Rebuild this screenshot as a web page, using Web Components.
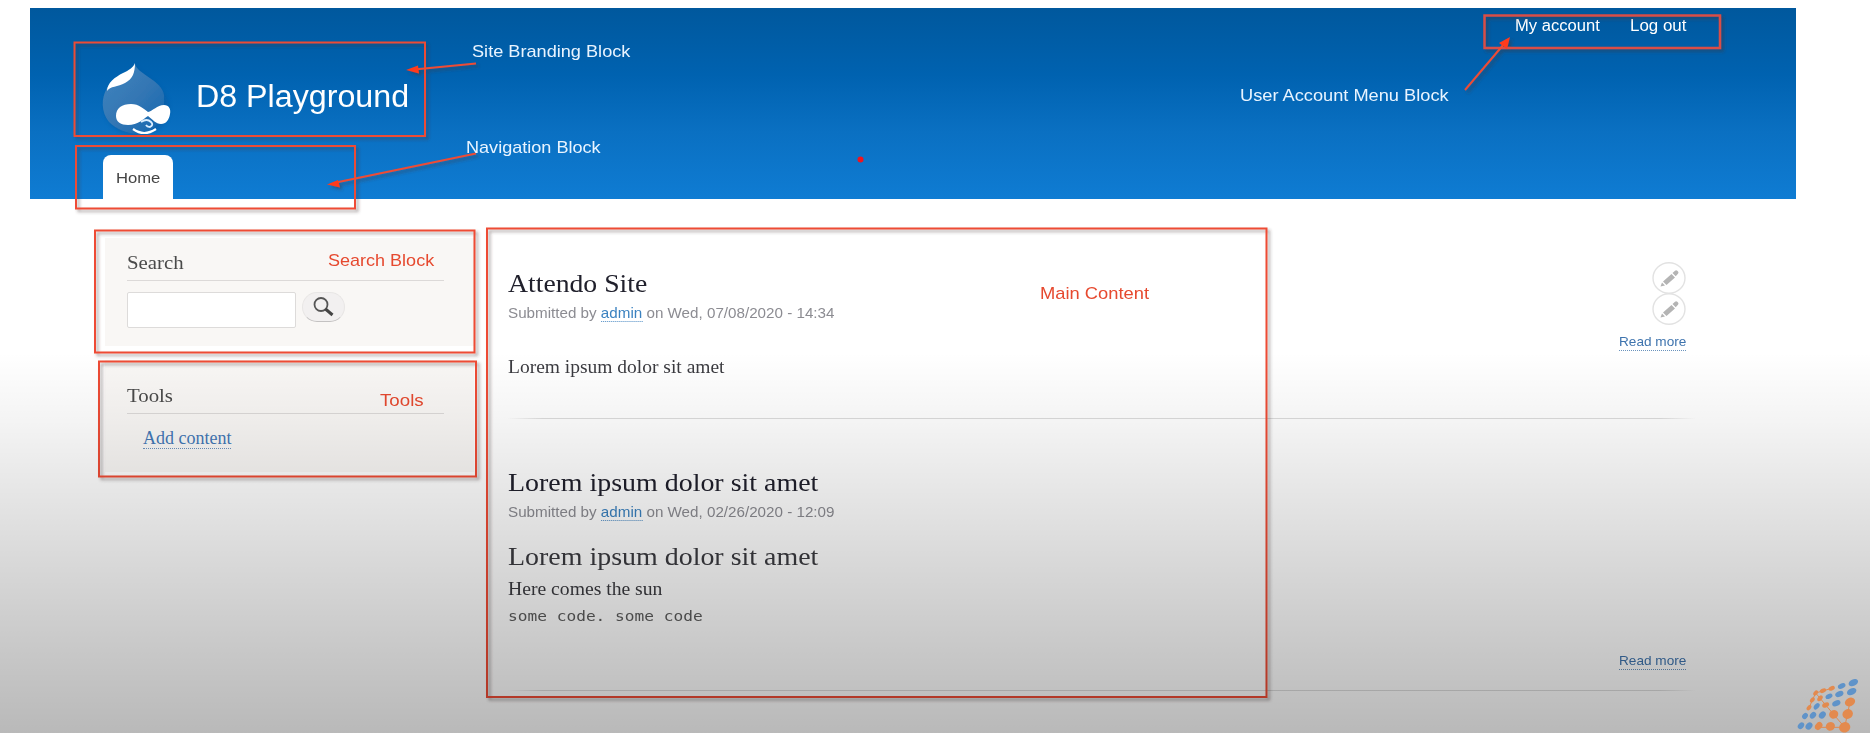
<!DOCTYPE html>
<html lang="en">
<head>
<meta charset="utf-8">
<title>D8 Playground</title>
<style>
html,body{margin:0;width:100%;height:733px;overflow:hidden;background:#fff}
body{position:relative;font-family:"Liberation Sans",Arial,sans-serif}
</style>
</head>
<body>
<site-page></site-page>
<script>
const define=(name,html,setup)=>customElements.define(name,class extends HTMLElement{
  constructor(){super();this.attachShadow({mode:'open'}).innerHTML=html;}
  connectedCallback(){if(setup)setup.call(this,this.shadowRoot);}
});

/* One line of text stretched to the width given in "w" */
define('fit-text',`<style>
:host{display:block;white-space:nowrap}
span{display:inline-block;transform-origin:0 50%}
</style><span><slot></slot></span>`,function(r){
  const w=+this.getAttribute('w'),s=r.querySelector('span');
  this.style.width=w+'px';
  s.style.transform='scaleX('+w/s.offsetWidth+')';
});

define('drop-logo',`<style>:host{display:block;width:72px;height:76px}svg{display:block}</style>
<svg width="72" height="76" viewBox="0 0 72 76">
<defs><filter id="b"><feGaussianBlur stdDeviation=".7"/></filter><filter id="c" x="-.2" y="-.2" width="1.4" height="1.4"><feGaussianBlur stdDeviation="2"/></filter>
<linearGradient id="g" x1="0" y1="0" x2="1" y2="1"><stop offset="0" stop-color="#3f85bf"/><stop offset=".5" stop-color="#3577b4"/><stop offset="1" stop-color="#1266b0"/></linearGradient></defs>
<path d="M34 3C37 13 67 22 68 45C69 63 54 73 37 73C17 73 3 61 3 43C3 22 31 18 34 3Z" fill="#07549a" opacity=".45" filter="url(#c)"/>
<path d="M34 2C36 12 61 18 63 33C64 50 60 62 48 69C36 75 18 70 8 60C0 50 0 36 6 26C13 15 31 15 34 2Z" fill="url(#g)" filter="url(#b)"/>
<path d="M34 1C34 10 32 17 24 21C17 25 9 24 6 29C6 21 14 15 22 11C28 8 32 6 34 1Z" fill="#fff" filter="url(#b)"/>
<path d="M15 54C15 46 21 42 30 42C38 42 43 47 47 50C52 49 56 43 63 43C68 43 70 47 69 52C68 58 65 62 60 62C55 62 51 57 47 54C42 57 37 63 27 63C20 63 15 60 15 54Z" fill="#fff"/>
<path d="M40 60Q46 56 50 60Q53 63 49 65Q46 65 45 63" fill="none" stroke="#dceeff" stroke-width="1.8"/>
<path d="M32 67Q43 75 55 67" fill="none" stroke="#fff" stroke-width="2.2"/>
</svg>`);

define('site-header',`<style>
:host{display:flex;justify-content:space-between;box-sizing:border-box;margin:8px 74px 0 30px;height:191px;padding:0 110px 0 71px;color:#fff;background:linear-gradient(#00589d,#0062b0 35%,#0a70c2 65%,#0f7cd3)}
.left{display:flex;flex-direction:column;justify-content:space-between}
.brand{display:flex;padding-top:54px;gap:23px}
.brand fit-text{font-size:31px;line-height:36px;margin-top:17px}
.tab{box-sizing:border-box;width:70px;height:44px;margin-left:2px;padding:12px 0 0 13px;background:#fff;border-radius:8px 8px 0 0;font-size:15.5px;line-height:22px;color:#444}
nav{display:flex;gap:30px;font-size:16px;line-height:20px;padding-top:8px;height:20px}
</style>
<div class="left"><div class="brand"><drop-logo></drop-logo><fit-text w="213">D8 Playground</fit-text></div>
<div class="tab"><fit-text w="44">Home</fit-text></div></div>
<nav><fit-text w="85">My account</fit-text><fit-text w="56">Log out</fit-text></nav>`);

define('side-block',`<style>
:host{display:block;box-sizing:border-box;width:369px;background:#f9f7f5;padding:0 30px 0 22px}
.h{height:31px;border-bottom:1px solid #dcd9d8;font:19px/26px "Liberation Serif",serif;color:#4a4a4a;box-sizing:border-box}
</style><div class="h"><slot name="title"></slot></div><slot></slot>`);

define('search-form',`<style>
:host{display:flex;gap:6px;padding-top:11px}
.in{width:167px;height:34px;border:1px solid #dddbda;background:#fff;border-radius:2px}
.b{width:41px;height:28px;border:1px solid #e8e6e5;border-bottom-color:#c4c2c2;border-radius:15px;background:#f2f0f0}
svg{display:block}
</style><div class="in"></div><div class="b"><svg width="41" height="28" viewBox="0 0 41 28"><circle cx="18" cy="11.5" r="6.5" fill="none" stroke="#555" stroke-width="1.8"/><path d="M22.500 16l7 6" stroke="#444" stroke-width="3"/></svg></div>`);

define('edit-button',`<style>:host{display:block;width:34px;height:31px}svg{display:block}</style>
<svg width="34" height="33" viewBox="0 0 34 33"><ellipse cx="17" cy="16" rx="16" ry="15.3" fill="#fff" stroke="#e2e2e2" stroke-width="1.4"/>
<g fill="#b4b4b4"><path d="M8.500 24.500l1.500-4 3 3zM11 19.500l8.500-7.500 3.500 3.500-8.500 7.500zM20.500 11l2.500-2.300q1.200-1 2.300 0l.7.8q1 1 0 2.200l-2.300 2.500z"/></g></svg>`);

define('post-item',`<style>
:host{display:flex;box-sizing:border-box;justify-content:space-between;width:1187px;border-bottom:1px solid transparent;border-image:linear-gradient(90deg,transparent,#dcdcdc 3%,#dcdcdc 97%,transparent) 1;padding-right:9px}
.side{display:flex;flex-direction:column;align-items:flex-end}
a{color:#3f74ae;font:13px/16px "Liberation Sans",Arial,sans-serif;border-bottom:1px dotted #6a93bd;height:16px}
</style><div><slot></slot></div><div class="side"><slot name="tools"></slot><a><fit-text w="67">Read more</fit-text></a></div>`);

define('annotation-layer',`<style>
:host{position:absolute;inset:0;pointer-events:none}
svg{position:absolute;left:0;top:0}
fit-text{position:absolute;font-size:17px;line-height:20px}
.w{color:#e9f4ff}.r{color:#e6492f}
</style>
<svg width="1870" height="733" viewBox="0 0 1870 733">
<defs><filter id="s" x="0" y="0" width="1870" height="733" filterUnits="userSpaceOnUse"><feDropShadow dx="2.500" dy="2.500" stdDeviation="1.500" flood-color="#433" flood-opacity=".45"/></filter></defs>
<g filter="url(#s)" fill="none" stroke="#ee4c34" stroke-width="2">
<path d="M74.500 42.500H425V136H74.500Z"/><path d="M76 146H355V208.500H76Z"/>
<path d="M1484.500 15.500H1720V48H1484.500Z" stroke="#d94d46" stroke-width="2.500"/>
<path d="M95 230.500H474.500V352.500H95Z"/><path d="M99 361.500H476V476.500H99Z"/><path d="M487 228.500H1266.500V697H487Z"/>
<path d="M476 63.500L414 69.500M476 153.500L336 182.500M1465 90L1504 44"/>
<g fill="#ff3a1c" stroke="none"><path d="M406 70L418 65.500L419 73.500Z"/><path d="M327 184.500L338 180L340 187.500Z"/><path d="M1510 37L1507 49L1499 43Z"/></g>
</g><circle cx="860.500" cy="159.500" r="3" fill="#f0141e"/></svg>
<fit-text class="w" w="158" style="left:472px;top:42px">Site Branding Block</fit-text>
<fit-text class="w" w="135" style="left:466px;top:138px">Navigation Block</fit-text>
<fit-text class="w" w="209" style="left:1240px;top:86px">User Account Menu Block</fit-text>
<fit-text class="r" w="106" style="left:328px;top:251px">Search Block</fit-text>
<fit-text class="r" w="44" style="left:380px;top:391px">Tools</fit-text>
<fit-text class="r" w="109" style="left:1040px;top:284px">Main Content</fit-text>`);

define('corner-logo',`<style>:host{position:absolute;right:0;bottom:0;width:90px;height:70px}svg{display:block}</style>
<svg width="90" height="70" viewBox="0 0 270 210"></svg>`,function(r){
  const o='#e38a4e',b='#5f93c9';
  const dots=[[107,90,9,o],[129,83,10,o],[155,76,10,o],[185,69,12,b],[220,59,15,b],[97,111,9,o],[120,106,10,o],[147,100,11,b],[178,93,13,b],[215,86,15,b],[87,134,9,o],[110,130,11,b],[137,126,11,o],[169,121,13,b],[210,117,16,o],[75,159,10,b],[99,157,11,b],[127,156,12,b],[161,154,14,o],[203,153,16,o],[63,188,11,b],[87,189,12,b],[116,189,13,o],[151,190,14,o],[194,193,17,o]];
  let s='<path d="M155 76L107 90L87 134M107 90L137 126L194 193H116M210 117L194 193" fill="none" stroke="'+o+'" stroke-width="3"/>';
  for(const [x,y,a,c] of dots){const k=y>140?(a>13?.9:.76):(y>110&&a>15?.78:.64);s+='<ellipse cx="'+x+'" cy="'+y+'" rx="'+a+'" ry="'+a*k+'" fill="'+c+'" transform="rotate('+(x<130&&y>86?-50:-25)+' '+x+' '+y+')"/>';}
  r.querySelector('svg').innerHTML=s;
});

define('site-page',`<style>
:host{display:block;height:733px;position:relative;overflow:hidden}
main{display:flex;padding:39px 0 0 105px;align-items:flex-start}
aside{display:flex;flex-direction:column;gap:14px;width:403px}
.search{padding-top:12px;height:108px}
.tools{padding-top:23px;height:112px}
.tool-link{display:inline-block;margin:14px 0 0 16px;font:18px/20px "Liberation Serif",serif;color:#4377b5;border-bottom:1px dotted #6d93bf;height:20px}
.posts{font-family:"Liberation Serif",serif;color:#3b3b40}
.p1{height:181px;padding-top:30px}
.p2{height:272px;padding-top:0}
.t{font-size:25.500px;line-height:30px;color:#20202c}
.m{font:15px/18px "Liberation Sans",Arial,sans-serif;color:#8c8c92}
.m a{color:#3b82c0;border-bottom:1px dotted #4e8cc4}
.b{font-size:18.500px;line-height:22px}
.c{font:14.600px/20px "DejaVu Sans Mono",monospace;color:#5c5c5c}
.shade{position:absolute;inset:0;background:linear-gradient(rgba(0,0,0,0) 352px,rgba(0,0,0,.045) 420px,rgba(0,0,0,.1) 495px,rgba(0,0,0,.165) 580px,rgba(0,0,0,.22) 655px,rgba(0,0,0,.275) 733px)}
</style>
<site-header></site-header>
<main>
<aside>
<side-block class="search"><fit-text slot="title" w="57">Search</fit-text><search-form></search-form></side-block>
<side-block class="tools"><fit-text slot="title" w="46">Tools</fit-text><span class="tool-link"><fit-text w="88">Add content</fit-text></span></side-block>
</aside>
<div class="posts">
<post-item class="p1"><fit-text class="t" w="139" style="margin-top:1px">Attendo Site</fit-text>
<fit-text class="m" w="326" style="margin-top:5px">Submitted by <a>admin</a> on Wed, 07/08/2020 - 14:34</fit-text>
<fit-text class="b" w="217" style="margin-top:34px">Lorem ipsum dolor sit amet</fit-text>
<div slot="tools" style="margin-top:-6px;height:72px"><edit-button></edit-button><edit-button></edit-button></div></post-item>
<post-item class="p2"><fit-text class="t" w="310" style="margin-top:49px">Lorem ipsum dolor sit amet</fit-text>
<fit-text class="m" w="326" style="margin-top:5px">Submitted by <a>admin</a> on Wed, 02/26/2020 - 12:09</fit-text>
<fit-text class="t" w="310" style="margin-top:21px;color:#3b3b40">Lorem ipsum dolor sit amet</fit-text>
<fit-text class="b" w="154" style="margin-top:6px">Here comes the sun</fit-text>
<fit-text class="c" w="195" style="margin-top:6px">some code. some code</fit-text>
<div slot="tools" style="height:234px"></div></post-item>
</div>
</main>
<annotation-layer></annotation-layer>
<div class="shade"></div>
<corner-logo></corner-logo>`);
</script>
</body>
</html>
